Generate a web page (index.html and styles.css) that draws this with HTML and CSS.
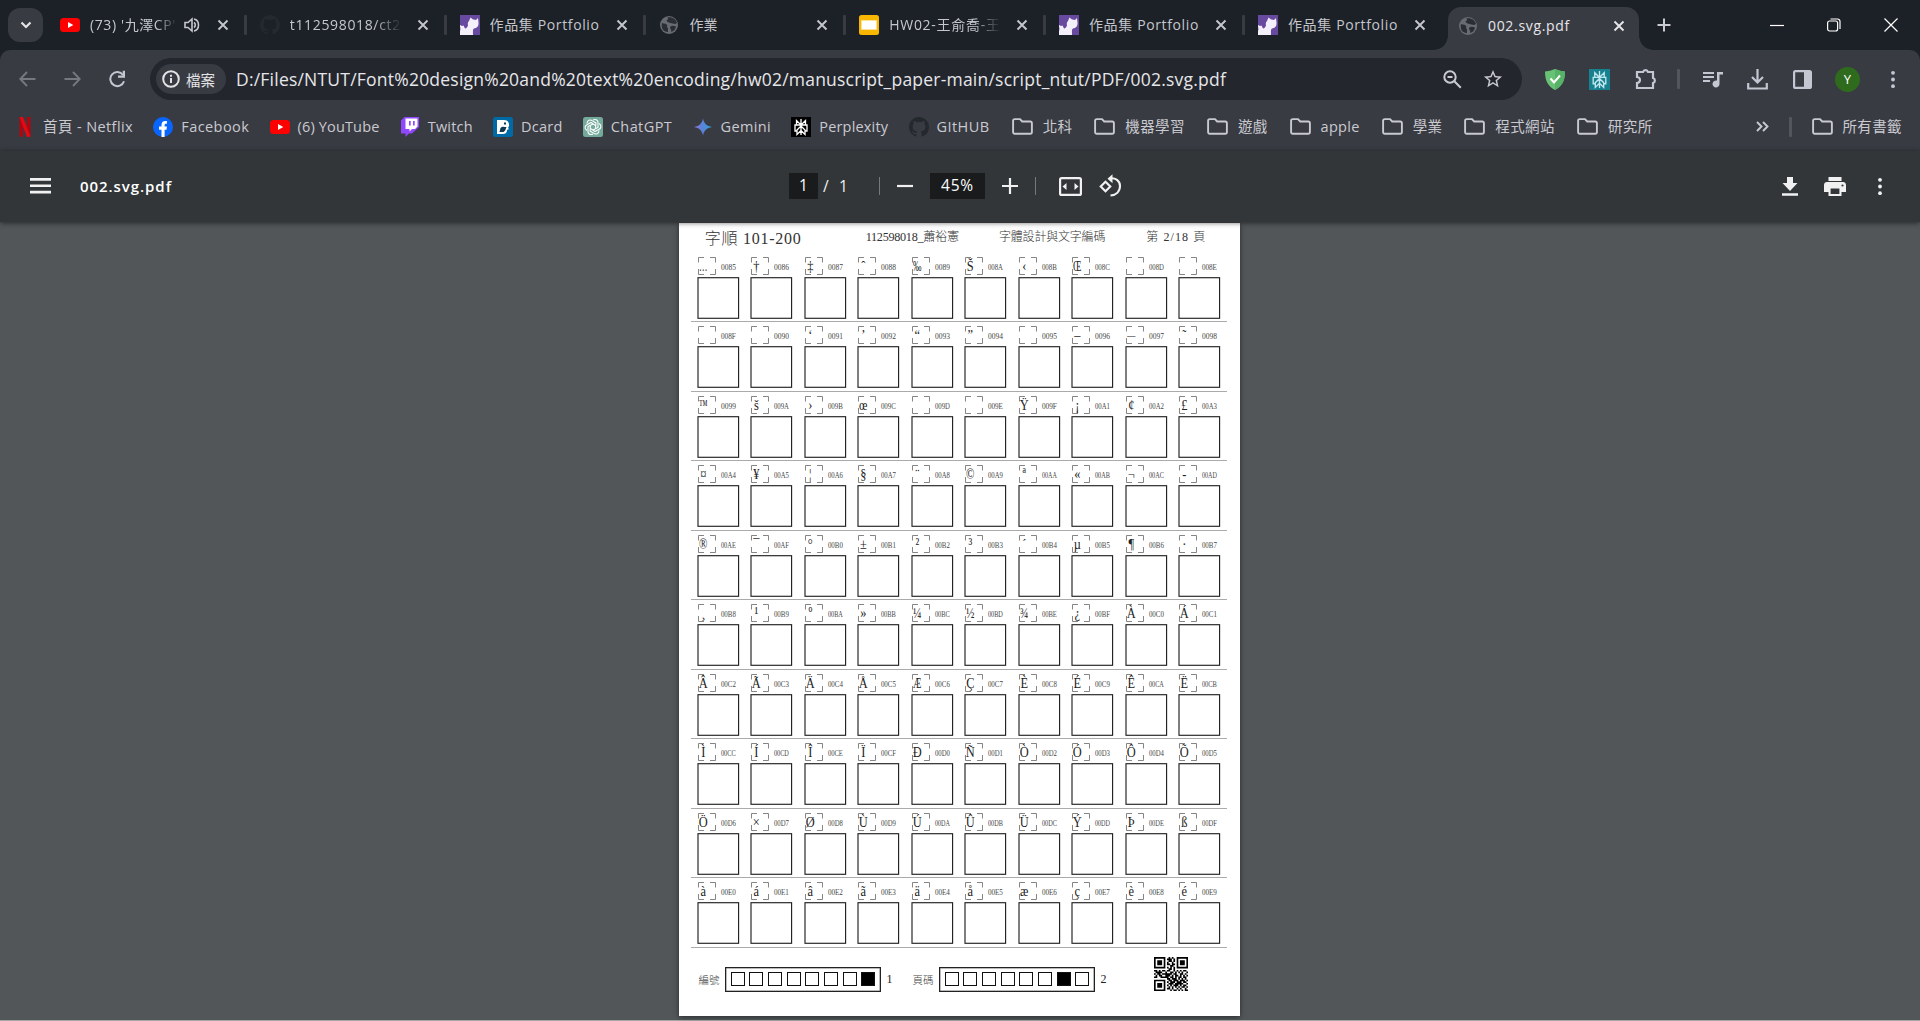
FILE: index.html
```html
<!DOCTYPE html>
<html lang="zh-Hant">
<head>
<meta charset="utf-8">
<title>002.svg.pdf</title>
<link rel="stylesheet" href="styles.css">
</head>
<body>
<svg class="defs" width="0" height="0" aria-hidden="true">
  <symbol id="x" viewBox="0 0 12 12"><path d="M1.500 1.500l9 9M10.500 1.500l-9 9" fill="none" stroke="currentColor" stroke-width="1.900"/></symbol>
  <symbol id="yt" viewBox="0 0 20 14"><rect width="20" height="14" rx="3.500" fill="#f00"/><path d="M8 4l5.300 3L8 10z" fill="#fff"/></symbol>
  <symbol id="gh" viewBox="0 0 16 16"><path fill="currentColor" d="M8 0C3.580 0 0 3.580 0 8c0 3.540 2.290 6.530 5.470 7.590.4.070.55-.17.55-.38v-1.490c-2.010.37-2.530-.49-2.690-.94-.09-.23-.48-.94-.82-1.130-.28-.15-.68-.52-.01-.53.63-.01 1.080.58 1.230.82.72 1.210 1.870.87 2.330.66.07-.52.28-.87.51-1.070-1.780-.2-3.640-.89-3.640-3.950 0-.87.31-1.590.82-2.150-.08-.2-.36-1.020.08-2.120 0 0 .67-.21 2.200.82a7.400 7.400 0 0 1 4 0c1.530-1.040 2.200-.82 2.200-.82.44 1.100.16 1.920.08 2.120.51.56.82 1.270.82 2.150 0 3.070-1.870 3.750-3.650 3.950.29.25.54.73.54 1.480v2.200c0 .21.15.46.55.38A8 8 0 0 0 16 8c0-4.420-3.580-8-8-8z"/></symbol>
  <symbol id="cat" viewBox="0 0 20 20"><path fill="#67499f" d="M0 0h20v20H0z"/><path fill="#f4f0fb" d="M9 6l1.500-3.500 2.500 2c1-.3 2 0 3 .5l2-2c.2 2 .5 4 .5 5 .3 3-1.500 5-4.500 5.500-1.500 1-1 3.500-1 6.500H0v-4c1-2 0-4-.2-6L2 11l1.500-.5 1.500 3c1.500 0 2.500-1.500 3-3-.5-2-.2-3.500 1-4.500z"/></symbol>
  <symbol id="globe" viewBox="0 0 20 20"><circle cx="10" cy="10" r="9" fill="#686b70"/><path fill="#2b2e35" d="M3 8c2 1 4 0 5 2 1 1-1 2 1 3v4C4 17 2 13 3 8zM8 2.500c2 .5 1 2-.5 3C8 7.500 10 7 11 8c2 0 3 1 5 1l2-1C17 4 13 1.500 8 2.500zM11 12c2-2 4-1 6-.5-.5 3-2.500 5-5 5.500 1-2-1-3-1-5z"/></symbol>
  <symbol id="folder" viewBox="0 0 21 17"><path d="M1.100 14V2.800C1.100 1.700 1.800 1.100 2.800 1.100H8l2.200 2.400h8c1 0 1.700.7 1.700 1.700V14c0 1-.7 1.800-1.700 1.800H2.800c-1 0-1.700-.8-1.700-1.800z" fill="none" stroke="currentColor" stroke-width="1.900"/></symbol>
  <symbol id="perp" viewBox="0 0 20 20"><path d="M10 2v16M10 8L5.500 3.500V8h9V3.500L10 8zM5.500 8H4v6h2M14.500 8H16v6h-2M10 9l-4 4v4.500l4-4M10 9l4 4v4.500l-4-4" fill="none" stroke="currentColor" stroke-width="1.300"/></symbol>
  <symbol id="dots" viewBox="0 0 6 20"><circle cx="3" cy="3" r="2"/><circle cx="3" cy="10" r="2"/><circle cx="3" cy="17" r="2"/></symbol>
</svg>

<header class="tabstrip">
  <button class="search"><svg width="12" height="8" viewBox="0 0 12 8"><path d="M1.500 1.500L6 6l4.500-4.500" fill="none" stroke="#e3e3e6" stroke-width="2.200"/></svg></button>
  <div class="tab"><svg class="fav" viewBox="0 0 20 14"><use href="#yt"/></svg><span class="title short fade"><span data-w="86">(73) '九澤CP'</span></span><svg class="sound" viewBox="0 0 16 16"><path d="M1 5.500h3L8 2v12L4 10.500H1zM10 5.500c1.700 1 1.700 4 0 5M10 2c6 1.300 6 10.700 0 12" fill="none" stroke="#c5c7cd" stroke-width="1.600"/></svg><svg class="close"><use href="#x"/></svg></div>
  <div class="tab"><svg class="fav gh"><use href="#gh"/></svg><span class="title fade"><span data-w="111">t112598018/ct2</span></span><svg class="close"><use href="#x"/></svg></div>
  <div class="tab"><svg class="fav"><use href="#cat"/></svg><span class="title"><span data-w="110">作品集 Portfolio</span></span><svg class="close"><use href="#x"/></svg></div>
  <div class="tab"><svg class="fav"><use href="#globe"/></svg><span class="title">作業</span><svg class="close"><use href="#x"/></svg></div>
  <div class="tab"><svg class="fav" viewBox="0 0 20 20"><rect width="20" height="20" rx="2.500" fill="#f8b600"/><path fill="#fff" stroke="#fbe29b" d="M2.500 5.500h15v9h-15z"/></svg><span class="title fade"><span data-w="111.500">HW02-王俞喬-王</span></span><svg class="close"><use href="#x"/></svg></div>
  <div class="tab narrow"><svg class="fav"><use href="#cat"/></svg><span class="title"><span data-w="110">作品集 Portfolio</span></span><svg class="close"><use href="#x"/></svg></div>
  <div class="tab last"><svg class="fav"><use href="#cat"/></svg><span class="title"><span data-w="110">作品集 Portfolio</span></span><svg class="close"><use href="#x"/></svg></div>
  <div class="tab active"><svg class="fav"><use href="#globe"/></svg><span class="title"><span data-w="82">002.svg.pdf</span></span><svg class="close"><use href="#x"/></svg></div>
  <svg class="plus" viewBox="0 0 14 14"><path d="M7 .5v13M.5 7h13" stroke="#c9cad2" stroke-width="2"/></svg>
  <div class="winctl">
    <svg width="14" height="14"><path d="M0 7.500h14" stroke="#fff" stroke-width="1.200"/></svg>
    <svg width="14" height="14" fill="none" stroke="#fff" stroke-width="1.200"><rect x=".6" y="3" width="10" height="10" rx="2"/><path d="M3.500 1h7a2.500 2.500 0 0 1 2.500 2.500V11"/></svg>
    <svg width="14" height="14"><path d="M.5.500l13 13M13.500.500l-13 13" stroke="#fff" stroke-width="1.200"/></svg>
  </div>
</header>

<nav class="toolbar">
  <span class="slot dim"><svg width="17" height="16" viewBox="0 0 17 16"><path d="M16.500 8H1.500M8 1L1.300 8 8 15" fill="none" stroke="currentColor" stroke-width="1.900"/></svg></span>
  <span class="slot dim"><svg width="17" height="16" viewBox="0 0 17 16"><path d="M.5 8h15M9 1l6.700 7L9 15" fill="none" stroke="currentColor" stroke-width="1.900"/></svg></span>
  <span class="slot"><svg width="18" height="18" viewBox="0 0 18 18"><path d="M15 11.200A7 7 0 1 1 14 5" fill="none" stroke="currentColor" stroke-width="2"/><path d="M16 .8v7H9V5.500h4.700V.8z" fill="currentColor"/></svg></span>
  <div class="omnibox">
    <span class="chip"><svg width="18" height="18" viewBox="0 0 18 18"><circle cx="9" cy="9" r="7.800" fill="none" stroke="currentColor" stroke-width="2"/><path d="M9 8v5M9 4.700v2" stroke="currentColor" stroke-width="2"/></svg><span>檔案</span></span>
    <span class="url"><span data-w="990">D:/Files/NTUT/Font%20design%20and%20text%20encoding/hw02/manuscript_paper-main/script_ntut/PDF/002.svg.pdf</span></span>
    <svg class="lens" width="19" height="19" viewBox="0 0 19 19" fill="none" stroke="#c9cad0" stroke-width="2"><circle cx="7" cy="7" r="5.700"/><path d="M11.300 11.300l6.500 6.500M4.500 7h5"/></svg>
    <svg width="20" height="20" viewBox="1 1 22 22" fill="#c9cad0"><path d="M22 9.240l-7.190-.62L12 2 9.190 8.630 2 9.240l5.460 4.730L5.820 21 12 17.270 18.180 21l-1.630-7.030zM12 15.400l-3.760 2.270 1-4.280-3.320-2.880 4.380-.38L12 6.100l1.710 4.040 4.380.38-3.320 2.880 1 4.280z"/></svg>
  </div>
  <div class="actions">
    <span class="slot"><svg width="20" height="21" viewBox="0 0 20 21"><path fill="#67c275" d="M0 2.500Q5 2 10 0q5 2 10 2.500C20 13 16 18 10 21 4 18 0 13 0 2.500z"/><path fill="#56b266" d="M10 0q5 2 10 2.500C20 13 16 18 10 21z"/><path d="M5.500 9.500l3.500 4 6-7" fill="none" stroke="#fff" stroke-width="2"/></svg></span>
    <span class="slot"><svg class="pext" width="21" height="21"><use href="#perp"/></svg></span>
    <span class="slot puzzle"><svg width="23" height="22" viewBox="0 0 23 22"><path d="M2 4h6a2.600 2.600 0 0 1 5 0h5v6a2.600 2.600 0 0 1 0 5v5H2v-5c4-.5 4-5.500 0-6z" fill="none" stroke="currentColor" stroke-width="2.200"/></svg></span>
    <i class="sep"></i>
    <span class="slot"><svg width="20" height="17" viewBox="0 0 20 17"><path fill="currentColor" d="M0 1h11v2H0zM0 5h11v2H0zM0 9h7v2H0zM14 1h6v2.500h-3.500V13a3.500 3.500 0 1 1-2.500-3.400z"/></svg></span>
    <span class="slot"><svg width="21" height="21" viewBox="0 0 21 21"><path d="M10.500 0v13M5 8l5.500 5.500L16 8M1.200 14v5.500h18.600V14" fill="none" stroke="currentColor" stroke-width="2.200"/></svg></span>
    <span class="slot"><svg width="19" height="19" viewBox="0 0 19 19"><rect x="1.100" y="1.100" width="16.800" height="16.800" rx="1.500" fill="none" stroke="currentColor" stroke-width="2.200"/><path fill="currentColor" d="M11 1h7v17h-7z"/></svg></span>
    <span class="slot"><b class="avatar">Y</b></span>
    <span class="slot"><svg width="6" height="19" fill="currentColor"><use href="#dots"/></svg></span>
  </div>
</nav>

<nav class="bookmarks">
  <a><svg viewBox="0 0 20 20"><path fill="#b1060f" d="M4.500 0H8v20l-3.500-.4zM12 0h3.500v19.600L12 20z"/><path fill="#e50914" d="M4.500 0H8l7.500 19.600L12 20z"/></svg><span data-w="90">首頁 - Netflix</span></a>
  <a><svg viewBox="0 0 20 20"><circle cx="10" cy="10" r="10" fill="#0866ff"/><path fill="#fff" d="M8.500 20v-7.200H6V9.600h2.500V8c0-3 1.500-4.600 5.400-4v2.800c-2-.2-2.300.3-2.300 1.600v1.200h2.300l-.4 3.200h-1.900V20z"/></svg><span data-w="68">Facebook</span></a>
  <a><svg viewBox="0 0 20 14"><use href="#yt"/></svg><span data-w="82">(6) YouTube</span></a>
  <a><svg viewBox="0 0 20 20"><path fill="#9146ff" d="M4.500 0L1 3.500v13h4.500V20L9 16.500h3L19 10V0z"/><path fill="#fff" d="M5.500 1.500h12v8L15 12h-3l-2.500 2.500V12h-4z"/><path fill="#9146ff" d="M9 4h1.700v4.500H9zM13 4h1.700v4.500H13z"/></svg><span data-w="45">Twitch</span></a>
  <a><svg viewBox="0 0 20 20"><rect width="20" height="20" rx="2.500" fill="#006aa6"/><path fill="#fff" d="M4 3h7c4 0 5.500 3 5 6l-1 2 1 1-2 1c0 3-2 4-4 4H4z"/><path fill="#123850" d="M7.500 11c1.500-2 3.500-1 6-1-1 2-1 4-3 5H6.500zM11 5.500h2v2h-2z"/></svg><span data-w="41.500">Dcard</span></a>
  <a><svg viewBox="0 0 20 20"><rect width="20" height="20" rx="2.500" fill="#74aa9c"/><g fill="none" stroke="#fff" stroke-width="1.100"><path id="petal" d="M10 3c3-1.500 5.500.5 5 3.500v4L10 13"/><use href="#petal" transform="rotate(60 10 10)"/><use href="#petal" transform="rotate(120 10 10)"/><use href="#petal" transform="rotate(180 10 10)"/><use href="#petal" transform="rotate(240 10 10)"/><use href="#petal" transform="rotate(300 10 10)"/></g></svg><span data-w="61.500">ChatGPT</span></a>
  <a><svg viewBox="0 0 20 20"><defs><linearGradient id="gem"><stop stop-color="#8f77d8"/><stop offset=".5" stop-color="#5684d9"/><stop offset="1" stop-color="#2fa6dc"/></linearGradient></defs><path fill="url(#gem)" d="M10 1.500C11 6.500 13.500 9 19 10c-5.500 1-8 3.500-9 8.500C9 13.500 6.500 11 1 10c5.500-1 8-3.500 9-8.500z"/></svg><span data-w="50.500">Gemini</span></a>
  <a><svg class="pblack"><use href="#perp"/></svg><span data-w="69">Perplexity</span></a>
  <a><svg class="gh"><use href="#gh"/></svg><span data-w="53">GItHUB</span></a>
  <a class="dir"><svg><use href="#folder"/></svg><span data-w="29.500">北科</span></a>
  <a class="dir"><svg><use href="#folder"/></svg><span data-w="59.500">機器學習</span></a>
  <a class="dir"><svg><use href="#folder"/></svg><span data-w="29.500">遊戲</span></a>
  <a class="dir"><svg><use href="#folder"/></svg><span data-w="39">apple</span></a>
  <a class="dir"><svg><use href="#folder"/></svg><span data-w="29.500">學業</span></a>
  <a class="dir"><svg><use href="#folder"/></svg><span data-w="59.500">程式網站</span></a>
  <a class="dir"><svg><use href="#folder"/></svg><span data-w="44.500">研究所</span></a>
  <div class="more">
    <svg width="13" height="11" viewBox="0 0 13 11"><path d="M1 1l4.500 4.500L1 10M7 1l4.500 4.500L7 10" fill="none" stroke="currentColor" stroke-width="1.900"/></svg>
    <i class="sep"></i>
    <a class="dir"><svg><use href="#folder"/></svg><span data-w="59.500">所有書籤</span></a>
  </div>
</nav>

<section class="pdfbar">
  <div class="left"><svg width="21" height="16" viewBox="0 0 21 16"><path fill="#f1f1f1" d="M0 0h21v2.700H0zM0 6.400h21v2.700H0zM0 12.800h21v2.700H0z"/></svg><strong><span data-w="92">002.svg.pdf</span></strong></div>
  <div class="mid">
    <span class="field page">1</span><span class="of">/</span><span class="of total">1</span><i></i>
    <svg width="16" height="16"><path d="M0 8h16" stroke="#f1f1f1" stroke-width="2.200"/></svg>
    <span class="field zoom"><span data-w="33">45%</span></span>
    <svg width="16" height="16"><path d="M0 8h16M8 0v16" stroke="#f1f1f1" stroke-width="2.200"/></svg><i class="b"></i>
    <svg class="fit" width="23" height="19" viewBox="0 0 23 19"><rect x="1.100" y="1.100" width="20.800" height="16.800" rx="1.500" fill="none" stroke="#f1f1f1" stroke-width="2.200"/><path fill="#f1f1f1" d="M7.500 6v7L3.500 9.500zM15.500 6v7l4-3.500z"/></svg>
    <svg width="23" height="24" viewBox="0 0 23 24"><path d="M7 8l4.800 4.800L7 17.600l-4.800-4.800zM11 4.800c6-1.200 10.500 2.500 10.500 7.500 0 5.500-4 9-9.500 9.500" transform="translate(-.5 -.3)" fill="none" stroke="#f1f1f1" stroke-width="2.100"/><path fill="#f1f1f1" d="M8.500 4.800L13.500.300v9z"/></svg>
  </div>
  <div class="right">
    <svg width="16" height="19" viewBox="0 0 16 19"><path fill="#f1f1f1" d="M5 0h6v6h4.500L8 14 .5 6H5zM0 16.200h16v2.500H0z"/></svg>
    <svg width="22" height="19" viewBox="0 0 22 19"><path fill="#f1f1f1" d="M4.500 0h13v4h-13zM3 5h16c1.700 0 3 1.300 3 3v7h-4.500v4h-13v-4H0V8c0-1.700 1.300-3 3-3z"/><path fill="#323639" d="M6.600 11.500h8.800V17H6.600z"/><circle cx="18.500" cy="8.500" r="1.100" fill="#323639"/></svg>
    <svg width="6" height="19" fill="#f1f1f1"><use href="#dots"/></svg>
  </div>
</section>

<main class="viewer">
  <article class="sheet">
    <svg class="head" width="561" height="29">
      <text x="25.700" y="20.500" font-size="16" textLength="96" xml:space="preserve">字順 101-200</text>
      <text x="186.700" y="18" font-size="12.200" textLength="93.500">112598018_蕭裕憲</text>
      <text x="320" y="18" font-size="12" textLength="106.400">字體設計與文字編碼</text>
      <text x="467.300" y="18" font-size="12" textLength="59" xml:space="preserve">第 2/18 頁</text>
    </svg>
    <div class="rows" id="rows"></div>
    <footer class="foot">
      <span class="lab">編號</span><span class="bits" data-on="7"></span><span class="num">1</span>
      <span class="lab second">頁碼</span><span class="bits" data-on="6"></span><span class="num">2</span>
      <svg id="qr" width="34" height="34" viewBox="0 0 21 21"></svg>
    </footer>
  </article>
</main>
<script src="app.js"></script>
</body>
</html>
```
FILE: styles.css
```css
* { box-sizing: border-box; }
body { margin: 0; width: 1920px; height: 1021px; overflow: hidden; background: #1c2027; color: #c9cad0; font-family: "Open Sans", "Noto Sans CJK TC", sans-serif; font-size: 15px; display: flex; flex-direction: column; }
svg { display: block; flex: none; }
.defs { position: absolute; }
button { border: 0; padding: 0; }
[data-w] { display: inline-block; white-space: nowrap; }

.tabstrip { height: 50px; flex: none; display: flex; align-items: center; padding-left: 8px; }
.search { width: 35px; height: 34px; border-radius: 12px; background: #393b43; display: flex; align-items: center; justify-content: center; margin-right: 3px; }
.tab { width: 199.800px; height: 30px; display: flex; align-items: center; padding: 0 17px 0 14px; font-size: 14px; position: relative; color: #c5c7cd; flex: none; }
.tab::after { content: ""; position: absolute; right: -1px; top: 5px; width: 3px; height: 20px; border-radius: 1px; background: #393b43; }
.tab.narrow { width: 199px; }
.tab.last { width: 204px; padding-right: 22px; }
.tab.last::after, .tab.active::after { display: none; }
.fav { width: 20px; height: 20px; margin-right: 10px; }
.gh { color: #24292e; }
.title { width: 112px; overflow: hidden; white-space: nowrap; line-height: 30px; }
.title.short { width: 88px; }
.fade { -webkit-mask-image: linear-gradient(90deg, #000 75%, transparent); mask-image: linear-gradient(90deg, #000 75%, transparent); }
.sound { width: 16px; height: 16px; margin-left: 6px; }
.close { width: 12px; height: 12px; margin-left: auto; }
.tab.active { width: 191px; height: 43px; margin-top: 7px; border-radius: 13px 13px 0 0; background: #393b43; color: #e6e6ea; padding: 0 14px 6px 10px; }
.tab.active::before { content: ""; position: absolute; left: -14px; right: -14px; bottom: 0; height: 14px; background: radial-gradient(circle at 0 0, transparent 13.500px, #393b43 14px) 0 0 / 14px 14px no-repeat, radial-gradient(circle at 14px 0, transparent 13.500px, #393b43 14px) 100% 0 / 14px 14px no-repeat; }
.plus { width: 14px; height: 14px; margin-left: 18px; }
.winctl { margin-left: auto; display: flex; gap: 43px; padding-right: 22px; }

.toolbar { height: 58px; flex: none; background: #393b43; border-radius: 10px 10px 0 0; display: flex; align-items: center; padding-left: 5px; color: #c4c6d2; }
.slot { width: 45px; display: flex; justify-content: center; flex: none; }
.slot.puzzle { padding-left: 4px; }
.dim { color: #76787f; }
.omnibox { width: 1372px; height: 42px; margin-left: 10px; border-radius: 21px; background: #23262d; display: flex; align-items: center; padding: 0 19px 0 6px; }
.chip { width: 70px; height: 30px; border-radius: 15px; background: #393b43; display: flex; align-items: center; gap: 6px; padding-left: 6px; color: #e3e3e6; font-size: 14.500px; }
.url { font-size: 17.500px; color: #e6e6ea; margin-left: 10px; line-height: 40px; }
.lens { margin-left: auto; margin-right: 21px; }
.actions { display: flex; align-items: center; margin-left: 10px; }
.sep { width: 3px; height: 20px; background: #54565f; margin: 0 10px; border-radius: 1px; }
.pext { background: #18808e; color: #bfe8ee; }
.avatar { width: 25px; height: 25px; border-radius: 50%; background: #2f6b1d; color: #fff; font-size: 13px; font-weight: 400; line-height: 25px; text-align: center; }

.bookmarks { height: 43px; flex: none; background: #393b43; display: flex; align-items: center; gap: 20.250px; padding: 0 18px 6px 15px; font-size: 14.500px; }
.bookmarks a { display: flex; align-items: center; gap: 8px; line-height: 36px; }
.bookmarks a > svg { width: 20px; height: 20px; }
.bookmarks a.dir { gap: 10px; margin-left: 1.900px; }
.bookmarks a.dir > svg { width: 21px; height: 17px; }
.bookmarks .pblack { background: #000; color: #fff; }
.more { margin-left: auto; display: flex; align-items: center; }
.more .sep { margin: 0 18px 0 20px; }

.pdfbar { height: 71px; flex: none; background: #323639; box-shadow: 0 1px 5px rgba(0,0,0,.55); position: relative; z-index: 2; display: grid; grid-template-columns: 789px 1fr 138px; align-items: center; color: #f1f1f1; padding-bottom: 1px; }
.left { display: flex; align-items: center; gap: 29px; padding-left: 30px; }
.left strong { font-weight: 600; color: #fff; }
.mid { display: flex; align-items: center; font-size: 15.500px; }
.field { background: #191b1c; height: 26px; line-height: 25px; text-align: center; color: #fff; }
.page { width: 29px; margin-right: 5px; }
.of { width: 10px; }
.total { margin-left: 6px; }
.mid i { width: 1px; height: 18px; background: #76797b; margin: 0 17px 0 30px; }
.zoom { width: 55px; margin: 0 17px 0 17px; font-size: 15.500px; }
.mid i.b { margin: 0 23px 0 17px; }
.fit { margin-right: 17px; }
.right { display: flex; align-items: center; gap: 26px; }
.right svg:last-child { margin-left: 5px; }

.viewer { flex: 1; background: #525659; display: flex; justify-content: center; border-bottom: 1px solid #a4a6a8; height: 799px; padding: 1px 1px 0 0; }
.sheet { width: 561px; height: 793px; margin-right: 1px; background: #fff; box-shadow: 0 1px 5px rgba(0,0,0,.5); font-family: "Liberation Serif", "Noto Sans CJK TC", serif; color: #222; display: flex; flex-direction: column; font-weight: 300; }
.head { fill: #333; }
.rows { padding: 1px 13px 0 12px; }
.row { height: 69.480px; display: flex; border-bottom: 1px solid #aaa; padding-left: 6px; }
.cell { width: 53.530px; height: 68px; }
.foot { display: flex; align-items: center; padding-left: 20px; height: 63px; font-size: 11px; }
.lab { width: 26.500px; font-size: 10.500px; color: #444; }
.second { margin-left: 18px; }
.bits { display: flex; gap: 4.700px; border: 1px solid #222; box-shadow: inset 0 0 0 .5px #777; width: 156px; height: 25px; padding: 4.500px; }
.bits b { width: 14px; height: 14px; border: 1px solid #111; }
.bits b.on { background: #000; }
.num { width: 8px; margin-left: 5.500px; font-size: 12px; }
#qr { margin-left: 45px; margin-bottom: 11px; }
```
FILE: app.js
```js
// Cells of the practice sheet: the glyph and its code point, ten per row.
const cp1252 = {0x85:'…',0x86:'†',0x87:'‡',0x88:'ˆ',0x89:'‰',0x8A:'Š',0x8B:'‹',0x8C:'Œ',0x91:'‘',0x92:'’',0x93:'“',0x94:'”',0x96:'–',0x97:'—',0x98:'˜',0x99:'™',0x9A:'š',0x9B:'›',0x9C:'œ',0x9F:'Ÿ',0xAD:'-'};
const wide = '…‰Œ™œ—¼½¾Æ©®æ';
const codes = [];
for (let c = 0x85; c <= 0xE9; c++) if (c !== 0xA0) codes.push(c);
let html = '';
for (let r = 0; r < 10; r++) {
  html += '<div class="row">';
  for (let k = 0; k < 10; k++) {
    const c = codes[r * 10 + k];
    const g = cp1252[c] || (c < 0xA0 ? '' : String.fromCharCode(c));
    const fit = wide.includes(g) ? ' textLength="10.500" lengthAdjust="spacingAndGlyphs"' : '';
    html += `<svg class="cell" viewBox="0 0 53.53 68"><path d="M1.500 9.500V4.500H7M13 4.500h5.500v5M18.500 16v5.500H13M7 21.500H1.500V16" fill="none" stroke="#777" stroke-width=".9"/>` +
      (g ? `<g transform="translate(6.300 17.900) scale(.8 1)"><text text-anchor="middle" font-size="15.500" fill="#222"${fit}>${g}</text></g>` : '') +
      `<text x="23.900" y="17.500" font-size="8.800" fill="#444" textLength="15" lengthAdjust="spacingAndGlyphs">${c.toString(16).toUpperCase().padStart(4, '0')}</text>` +
      `<rect x="1" y="24.700" width="40.600" height="40.600" fill="none" stroke="#222" stroke-width="1.150"/></svg>`;
  }
  html += '</div>';
}
document.getElementById('rows').innerHTML = html;

// Eight marker squares, one filled.
document.querySelectorAll('.bits').forEach(el => {
  for (let i = 0; i < 8; i++) {
    const b = document.createElement('b');
    if (i === +el.dataset.on) b.className = 'on';
    el.append(b);
  }
});

const qr = [
'111111100101001111111','100000101110101000001','101110100110101011101','101110101001001011101','101110101101101011101','100000100011001000001','111111101010101111111',
'000000000110100000000','110101101100101010110','011110010011010101001','101101111110110011010','010110011101011010101','110011111011010110110',
'000000001101110101010','111111100110111011101','100000101011101110110','101110100111011111001','101110101010111010110','101110100101010101101','100000101101001010010','111111100010110101011'];
let d = '';
qr.forEach((row, y) => [...row].forEach((v, x) => { if (v === '1') d += `M${x} ${y}h1.030v1.030h-1.030z`; }));
document.getElementById('qr').innerHTML = `<path d="${d}"/>`;

// Track labels to their set width.
document.querySelectorAll('[data-w]').forEach(el => {
  const w = +el.dataset.w, n = [...el.textContent].length;
  el.style.letterSpacing = (w - el.getBoundingClientRect().width) / n + 'px';
  el.style.width = w + 'px';
});
```
